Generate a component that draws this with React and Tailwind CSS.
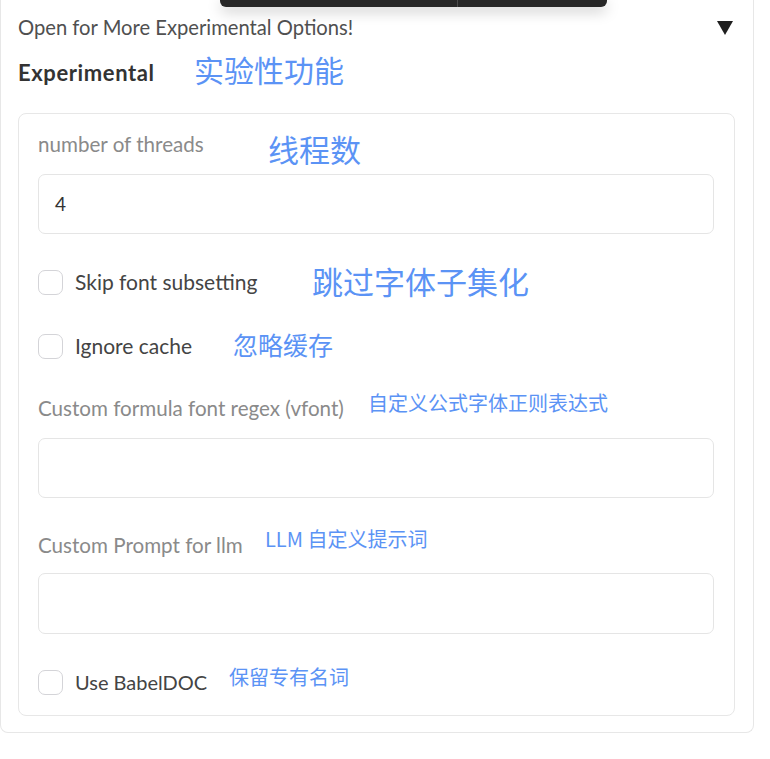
import React from 'react'

const UI_FONT = { fontFamily: '"Lato", "Open Sans", sans-serif' }
const CJK_FONT = { fontFamily: '"Noto Sans CJK SC", "Noto Sans", sans-serif' }

function Note({ children, className = '' }) {
  return (
    <span className={`text-[#5b93f5] leading-none whitespace-nowrap ${className}`} style={CJK_FONT}>
      {children}
    </span>
  )
}

function Checkbox({ label, labelWidth, labelClass = 'text-[21px]', note, noteClass, className = '' }) {
  return (
    <div className={`flex items-center h-[24px] ${className}`}>
      <span className="w-[25px] h-[25px] shrink-0 rounded-[7px] border border-[#d4d4d8] bg-white" />
      <span className={`ml-[12px] text-[#444] whitespace-nowrap ${labelClass}`} style={{ ...UI_FONT, width: labelWidth }}>
        {label}
      </span>
      <Note className={noteClass}>{note}</Note>
    </div>
  )
}

function FieldLabel({ label, labelWidth, note, noteClass, className = '' }) {
  return (
    <div className={`flex items-center h-[24px] ${className}`}>
      <span className="text-[20.6px] text-[#8a8a8a] whitespace-nowrap" style={{ ...UI_FONT, width: labelWidth }}>
        {label}
      </span>
      <Note className={noteClass}>{note}</Note>
    </div>
  )
}

export default function App() {
  return (
    <div className="relative w-[770px] h-[759px] bg-white overflow-hidden">
      {/* tooltip bar overlapping from above */}
      <div className="absolute left-[220px] top-0 w-[387px] h-[7px] bg-[#272727] rounded-b-[6px] shadow-[0_4px_14px_rgba(0,0,0,0.25)] flex">
        <div className="w-[238px] h-full border-r border-[#4a4a4a]" />
      </div>

      <div className="w-[754px] border border-t-0 border-[#e7e7e7] rounded-b-[8px] bg-white pb-[16px]">
        {/* accordion header */}
        <div className="flex items-center justify-between pl-[17px] pr-[20px] pt-[17px] h-[37px]">
          <span className="text-[20.2px] text-[#505050] leading-[20px]" style={UI_FONT}>
            Open for More Experimental Options!
          </span>
          <svg width="16" height="14" viewBox="0 0 16 14" className="mt-[2px]">
            <polygon points="0,0 16,0 8,14" fill="#1f1f1f" />
          </svg>
        </div>

        {/* section title */}
        <div className="flex items-center h-[28px] mt-[21px] pl-[17px]">
          <span className="w-[176px] text-[22px] font-bold text-[#333] tracking-[0.6px]" style={UI_FONT}>
            Experimental
          </span>
          <Note className="text-[30px] -mt-[6px]">实验性功能</Note>
        </div>

        {/* inner block */}
        <div className="ml-[17px] mr-[18px] mt-[27px] border border-[#e7e7e7] rounded-[8px] pl-[19px] pr-[20px] pt-[18px] pb-[21px]">
          <FieldLabel
            label="number of threads"
            labelWidth="230px"
            note="线程数"
            noteClass="text-[31px] mt-[9px]"
          />
          <div className="mt-[18px] h-[60px] border border-[#e5e5e5] rounded-[7px] flex items-center pl-[16px]">
            <span className="text-[19px] text-[#333]" style={UI_FONT}>4</span>
          </div>

          <Checkbox
            className="mt-[36px]"
            label="Skip font subsetting"
            labelWidth="237px"
            note="跳过字体子集化"
            noteClass="text-[31px] -mt-[4px]"
          />
          <Checkbox
            className="mt-[40px]"
            label="Ignore cache"
            labelWidth="158px"
            note="忽略缓存"
            noteClass="text-[25px] -mt-[4px]"
          />

          <FieldLabel
            className="mt-[38px]"
            label="Custom formula font regex (vfont)"
            labelWidth="330px"
            note="自定义公式字体正则表达式"
            noteClass="text-[20px] -mt-[10px]"
          />
          <div className="mt-[18px] h-[60px] border border-[#e5e5e5] rounded-[7px]" />

          <FieldLabel
            className="mt-[35px]"
            label="Custom Prompt for llm"
            labelWidth="227px"
            note="LLM 自定义提示词"
            noteClass="text-[20px] -mt-[12px]"
          />
          <div className="mt-[16px] h-[61px] border border-[#e5e5e5] rounded-[7px]" />

          <Checkbox
            className="mt-[36px]"
            label="Use BabelDOC"
            labelWidth="154px"
            labelClass="text-[20px]"
            note="保留专有名词"
            noteClass="text-[20px] -mt-[10px]"
          />
        </div>
      </div>
    </div>
  )
}
